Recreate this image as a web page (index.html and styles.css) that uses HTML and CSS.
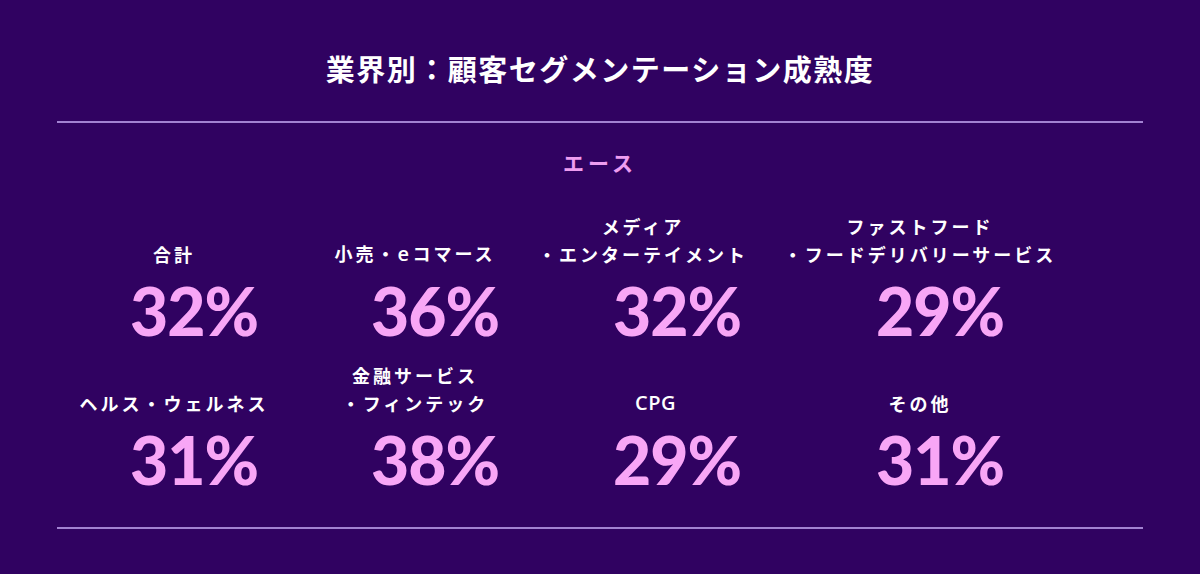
FILE: index.html
```html
<!DOCTYPE html>
<html lang="ja">
<head>
<meta charset="utf-8">
<title>業界別：顧客セグメンテーション成熟度</title>
<link rel="stylesheet" href="styles.css">
</head>
<body>
<main class="slide">
  <h1 class="title">業界別：顧客セグメンテーション成熟度</h1>
  <hr class="rule rule--top">
  <section class="segment">
    <h2 class="segment-name">エース</h2>
    <div class="grid">
      <div class="cell"><div class="label">合計</div><div class="value">32%</div></div>
      <div class="cell"><div class="label">小売・<span class="latin">e</span>コマース</div><div class="value">36%</div></div>
      <div class="cell cell--shift-left"><div class="label">メディア<br>・エンターテイメント</div><div class="value">32%</div></div>
      <div class="cell"><div class="label">ファストフード<br>・フードデリバリーサービス</div><div class="value">29%</div></div>
      <div class="cell"><div class="label">ヘルス・ウェルネス</div><div class="value">31%</div></div>
      <div class="cell"><div class="label">金融サービス<br>・フィンテック</div><div class="value">38%</div></div>
      <div class="cell"><div class="label"><span class="latin">CPG</span></div><div class="value">29%</div></div>
      <div class="cell"><div class="label">その他</div><div class="value">31%</div></div>
    </div>
  </section>
  <hr class="rule rule--bottom">
</main>
</body>
</html>
```

FILE: styles.css
```css
html, body {
  margin: 0;
  padding: 0;
}

body {
  background: #300261;
  width: 1200px;
  height: 574px;
  overflow: hidden;
  font-family: "Noto Sans CJK JP", "Noto Sans", sans-serif;
  color: #ffffff;
}

.slide {
  padding: 48px 57px 0;
}

.title {
  margin: 0;
  font-size: 29px;
  line-height: 40px;
  font-weight: 700;
  letter-spacing: 1.5px;
  text-align: center;
}

.rule {
  border: 0;
  height: 2px;
  margin: 0;
  background: #a282d2;
}

.rule--top {
  margin-top: 33px;
}

.rule--bottom {
  margin-top: 34px;
}

.segment-name {
  margin: 24px 0 0;
  font-size: 21px;
  line-height: 30px;
  font-weight: 700;
  letter-spacing: 4px;
  color: #ee9df0;
  text-align: center;
}

.grid {
  margin-top: 35px;
  display: grid;
  grid-template-columns: 234px 248px 236px 290px;
  row-gap: 17px;
  align-items: end;
}

.cell {
  display: flex;
  flex-direction: column;
  align-items: center;
}

.cell--shift-left .label {
  margin-right: 28px;
}

.label {
  font-size: 18px;
  line-height: 28px;
  font-weight: 700;
  letter-spacing: 3px;
  text-align: center;
  white-space: nowrap;
}

.latin {
  font-family: "Open Sans", "Noto Sans", sans-serif;
  font-size: 20px;
  font-weight: 600;
  letter-spacing: 0.5px;
  margin-right: 3px;
}

.value {
  margin-top: 10px;
  padding-left: 40px;
  font-family: "Lato", "Liberation Sans", sans-serif;
  font-size: 66px;
  line-height: 66px;
  font-weight: 900;
  letter-spacing: -1px;
  color: #f8a6f6;
}
```
